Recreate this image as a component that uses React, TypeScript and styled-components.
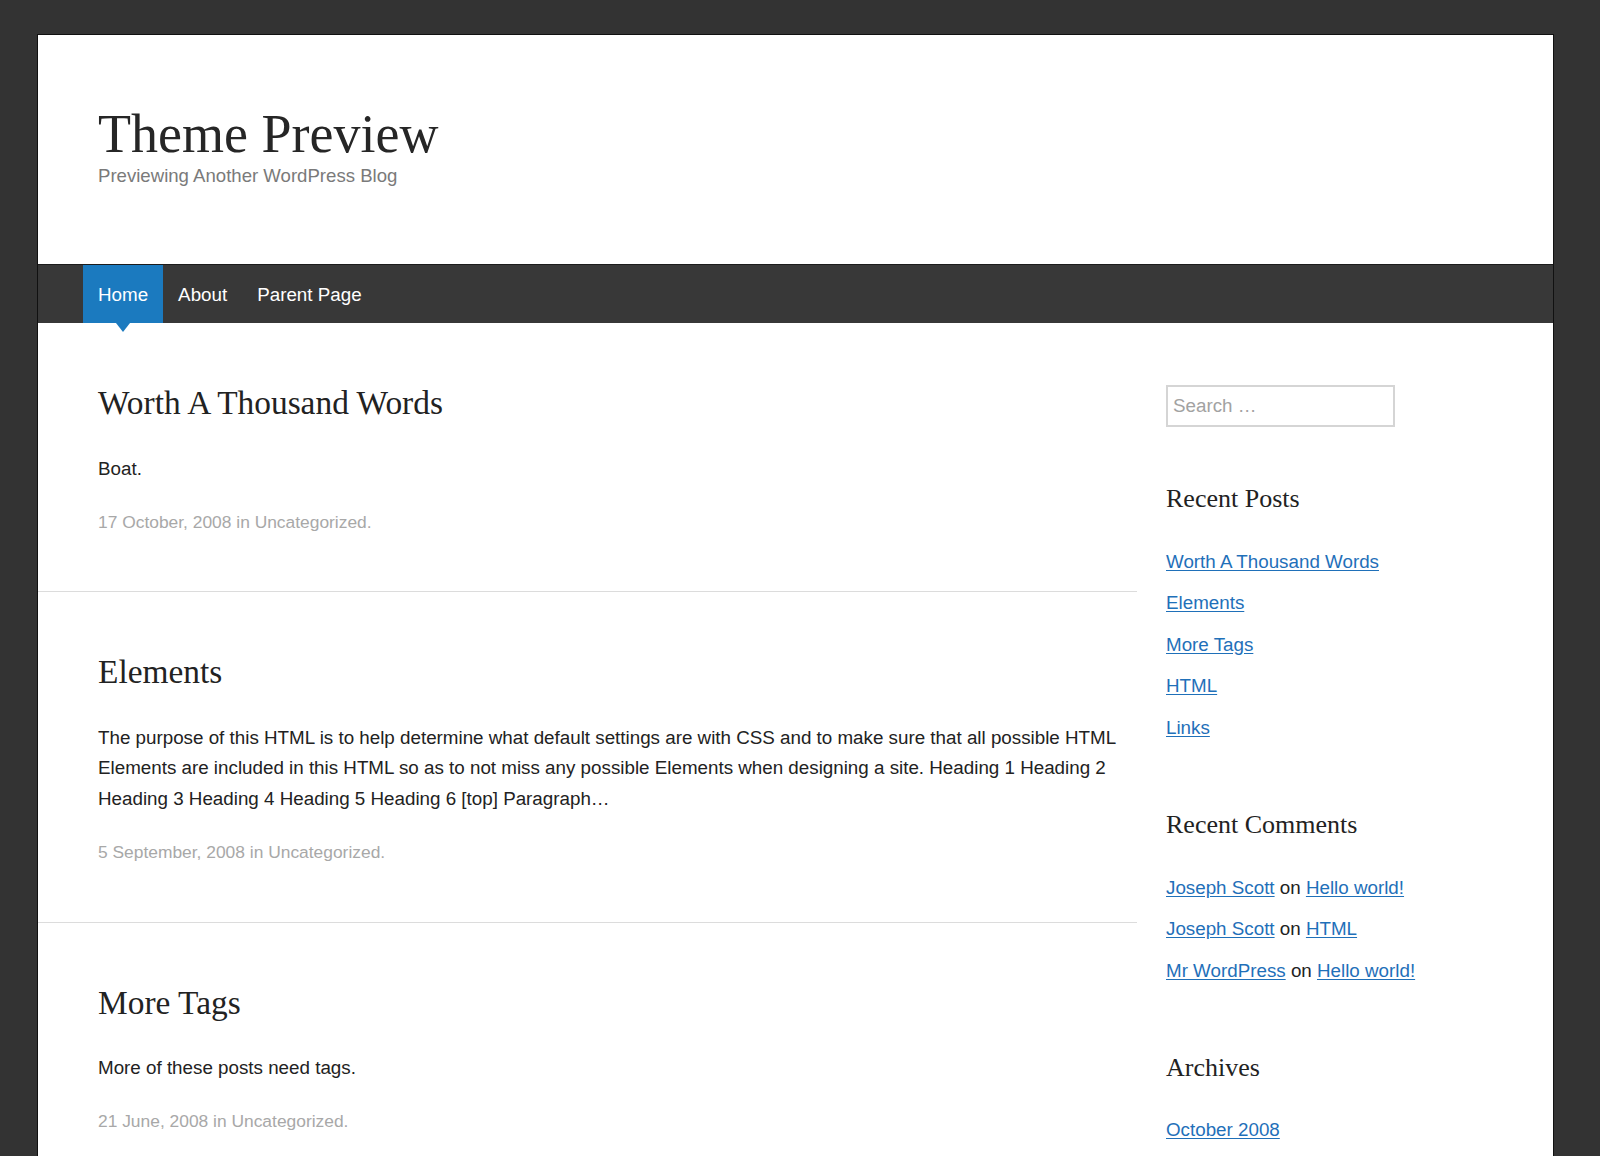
import React from 'react';
import styled, { createGlobalStyle } from 'styled-components';

const GlobalStyle = createGlobalStyle`
  body {
    margin: 0;
    background: #333333;
    font-family: "Liberation Sans", Arial, sans-serif;
    color: #222;
  }
`;

const Page = styled.div`
  padding: 34px 0 0 37px;
`;

const Panel = styled.div`
  width: 1517px;
  box-sizing: border-box;
  background: #fff;
  border: 1px solid #111;
`;

const Header = styled.header`
  padding: 71px 60px 75px;
`;

const SiteTitle = styled.h1`
  margin: 0;
  font-family: "Liberation Serif", "Times New Roman", serif;
  font-weight: normal;
  font-size: 54px;
  line-height: 57px;
  color: #262626;
`;

const Tagline = styled.div`
  font-size: 18.6px;
  line-height: 26px;
  color: #7a7a7a;
`;

const Nav = styled.nav`
  background: #383838;
  border-top: 1px solid #1c1c1c;
  height: 58px;
  padding-left: 45px;
  display: flex;
`;

const NavItem = styled.a<{ $active?: boolean }>`
  position: relative;
  display: block;
  padding: 2px 15px 0;
  line-height: 56px;
  font-size: 18.8px;
  color: #fff;
  text-decoration: none;
  background: ${p => (p.$active ? '#1b7abf' : 'transparent')};

  ${p =>
    p.$active &&
    `
    &::after {
      content: '';
      position: absolute;
      left: 50%;
      top: 100%;
      margin-left: -7px;
      border-left: 7px solid transparent;
      border-right: 7px solid transparent;
      border-top: 9px solid #1b7abf;
    }
  `}
`;

const Body = styled.div`
  display: grid;
  grid-template-columns: 1099px 1fr;
`;

const Main = styled.main``;

const Article = styled.article`
  padding: 59px 0 54px 60px;
  border-bottom: 1px solid #dcdcdc;
`;

const PostTitle = styled.h2`
  margin: 0 0 30px;
  font-family: "Liberation Serif", "Times New Roman", serif;
  font-weight: normal;
  font-size: 33.4px;
  line-height: 41.6px;
  color: #222;
`;

const Excerpt = styled.p`
  margin: 0 0 23px;
  font-size: 18.8px;
  line-height: 30.3px;
  color: #222;
`;

const Meta = styled.div`
  font-size: 17.4px;
  line-height: 30.6px;
  color: #a8a8a8;
`;

const Sidebar = styled.aside`
  padding: 62px 0 0 29px;
`;

const SearchInput = styled.input`
  display: block;
  width: 229px;
  height: 42px;
  box-sizing: border-box;
  border: 2px solid #d5d5d5;
  padding: 0 5px;
  margin: 0 0 55px;
  font-family: "Liberation Sans", Arial, sans-serif;
  font-size: 18.8px;
  color: #222;
  outline: none;

  &::placeholder {
    color: #a2a2a2;
  }
`;

const Widget = styled.section`
  margin-bottom: 64.5px;
`;

const WidgetTitle = styled.h3`
  margin: 0 0 31px;
  font-family: "Liberation Serif", "Times New Roman", serif;
  font-weight: normal;
  font-size: 26px;
  line-height: 33.8px;
  color: #222;
`;

const LinkList = styled.ul`
  list-style: none;
  margin: 0;
  padding: 0;
  display: flex;
  flex-direction: column;
  gap: 10.9px;
`;

const LinkItem = styled.li`
  font-size: 18.8px;
  line-height: 30.6px;
  color: #222;
`;

const Link = styled.a`
  color: #1f70b9;
  text-decoration: underline;
  text-underline-offset: 2px;
`;

const posts = [
  {
    title: 'Worth A Thousand Words',
    excerpt: 'Boat.',
    date: '17 October, 2008',
  },
  {
    title: 'Elements',
    excerpt:
      'The purpose of this HTML is to help determine what default settings are with CSS and to make sure that all possible HTML Elements are included in this HTML so as to not miss any possible Elements when designing a site. Heading 1 Heading 2 Heading 3 Heading 4 Heading 5 Heading 6 [top] Paragraph…',
    date: '5 September, 2008',
  },
  {
    title: 'More Tags',
    excerpt: 'More of these posts need tags.',
    date: '21 June, 2008',
  },
];

const recentPosts = ['Worth A Thousand Words', 'Elements', 'More Tags', 'HTML', 'Links'];

const comments = [
  { author: 'Joseph Scott', post: 'Hello world!' },
  { author: 'Joseph Scott', post: 'HTML' },
  { author: 'Mr WordPress', post: 'Hello world!' },
];

export default function App() {
  return (
    <Page>
      <GlobalStyle />
      <Panel>
        <Header>
          <SiteTitle>Theme Preview</SiteTitle>
          <Tagline>Previewing Another WordPress Blog</Tagline>
        </Header>
        <Nav>
          <NavItem $active>Home</NavItem>
          <NavItem>About</NavItem>
          <NavItem>Parent Page</NavItem>
        </Nav>
        <Body>
          <Main>
            {posts.map(post => (
              <Article key={post.title}>
                <PostTitle>{post.title}</PostTitle>
                <Excerpt>{post.excerpt}</Excerpt>
                <Meta>{post.date} in Uncategorized.</Meta>
              </Article>
            ))}
          </Main>
          <Sidebar>
            <SearchInput placeholder="Search …" />
            <Widget>
              <WidgetTitle>Recent Posts</WidgetTitle>
              <LinkList>
                {recentPosts.map(title => (
                  <LinkItem key={title}>
                    <Link href="#">{title}</Link>
                  </LinkItem>
                ))}
              </LinkList>
            </Widget>
            <Widget>
              <WidgetTitle>Recent Comments</WidgetTitle>
              <LinkList>
                {comments.map((c, i) => (
                  <LinkItem key={i}>
                    <Link href="#">{c.author}</Link> on <Link href="#">{c.post}</Link>
                  </LinkItem>
                ))}
              </LinkList>
            </Widget>
            <Widget>
              <WidgetTitle>Archives</WidgetTitle>
              <LinkList>
                <LinkItem>
                  <Link href="#">October 2008</Link>
                </LinkItem>
              </LinkList>
            </Widget>
          </Sidebar>
        </Body>
      </Panel>
    </Page>
  );
}
